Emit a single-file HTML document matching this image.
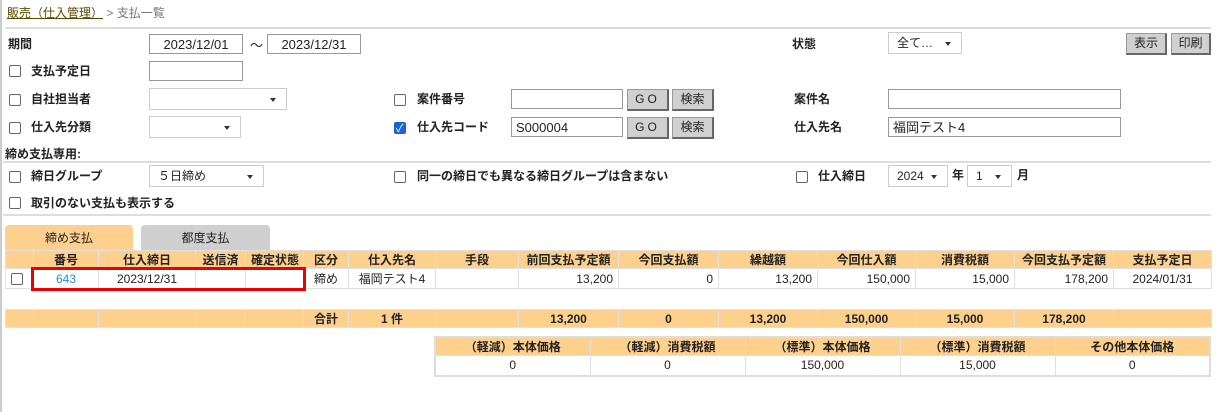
<!DOCTYPE html>
<html><head><meta charset="utf-8"><style>
*{box-sizing:border-box}
body{margin:0;width:1216px;height:412px;background:#fff;font-family:"Liberation Sans","Noto Sans CJK JP",sans-serif;font-size:12px;color:#222;position:relative;overflow:hidden}
.a{position:absolute}
.lb{font-weight:bold;font-size:12px;margin-top:-2px}
.inp{position:absolute;border:1px solid #999;background:#fff;height:20px;font-size:13px;padding:1px 4px;line-height:17px}
.sel{position:absolute;border:1px solid #ccc;background:#fff;height:22px;font-size:12px;padding:2px 8px;line-height:16px}
.sel:after{content:"";position:absolute;right:10px;top:9px;border:3px solid transparent;border-top:4px solid #333}
.cb{position:absolute;width:12px;height:12px;border:1px solid #666;border-radius:2px;background:#fff}
.cbk{background:#1a62d6;border-color:#1a62d6}
.btn{position:absolute;height:22px;background:#d0d0d0;border:1px solid #999;border-right:2px solid #666;border-bottom:2px solid #666;font-size:12px;text-align:center;line-height:18px}
table{border-collapse:collapse;position:absolute;table-layout:fixed}
td{border:1px solid #e0e0e0;padding:0 5px;font-size:12px;height:20px;white-space:nowrap;overflow:hidden}
.h td{background:#fdd08e;font-weight:bold;text-align:center;height:18px}
.r{text-align:right}.c{text-align:center}
</style></head><body>
<div class="a" style="left:0;top:0;width:2px;height:412px;background:#ccc"></div>
<div class="a" style="left:7px;top:4px;font-size:12px"><span style="color:#5a4a00;text-decoration:underline">販売（仕入管理）</span> <span style="color:#777">&gt; 支払一覧</span></div>
<div class="a" style="left:5px;top:27px;width:1206px;height:2px;background:#ddd"></div>

<div class="a lb" style="left:8px;top:37px">期間</div>
<div class="inp" style="left:149px;top:34px;width:94px;text-align:center">2023/12/01</div>
<div class="a" style="left:250px;top:35px;font-size:13px">～</div>
<div class="inp" style="left:267px;top:34px;width:94px;text-align:center">2023/12/31</div>
<div class="a lb" style="left:792px;top:37px">状態</div>
<div class="sel" style="left:888px;top:32px;width:74px">全て…</div>
<div class="btn" style="left:1126px;top:33px;width:41px">表示</div>
<div class="btn" style="left:1171px;top:33px;width:40px">印刷</div>

<div class="cb" style="left:9px;top:65px"></div><div class="a lb" style="left:31px;top:64px">支払予定日</div>
<div class="inp" style="left:149px;top:61px;width:94px"></div>

<div class="cb" style="left:9px;top:94px"></div><div class="a lb" style="left:31px;top:92px">自社担当者</div>
<div class="sel" style="left:149px;top:88px;width:138px"></div>
<div class="cb" style="left:394px;top:94px"></div><div class="a lb" style="left:417px;top:92px">案件番号</div>
<div class="inp" style="left:511px;top:89px;width:112px"></div>
<div class="btn" style="left:627px;top:89px;width:42px;letter-spacing:3px">GO</div>
<div class="btn" style="left:672px;top:89px;width:42px">検索</div>
<div class="a lb" style="left:794px;top:92px">案件名</div>
<div class="inp" style="left:888px;top:89px;width:233px"></div>

<div class="cb" style="left:9px;top:122px"></div><div class="a lb" style="left:31px;top:120px">仕入先分類</div>
<div class="sel" style="left:149px;top:116px;width:92px"></div>
<div class="cb cbk" style="left:394px;top:122px"><span style="position:absolute;left:1px;top:-3px;color:#fff;font-size:11px">✓</span></div><div class="a lb" style="left:417px;top:120px">仕入先コード</div>
<div class="inp" style="left:511px;top:117px;width:112px">S000004</div>
<div class="btn" style="left:627px;top:117px;width:42px;letter-spacing:3px">GO</div>
<div class="btn" style="left:672px;top:117px;width:42px">検索</div>
<div class="a lb" style="left:794px;top:120px">仕入先名</div>
<div class="inp" style="left:888px;top:117px;width:233px">福岡テスト4</div>

<div class="a lb" style="left:5px;top:147px">締め支払専用:</div>
<div class="a" style="left:3px;top:161px;width:1208px;height:2px;background:#ddd"></div>
<div class="a" style="left:3px;top:214px;width:1208px;height:2px;background:#ddd"></div>
<div class="cb" style="left:9px;top:171px"></div><div class="a lb" style="left:31px;top:169px">締日グループ</div>
<div class="sel" style="left:149px;top:165px;width:115px">５日締め</div>
<div class="cb" style="left:394px;top:171px"></div><div class="a lb" style="left:417px;top:169px">同一の締日でも異なる締日グループは含まない</div>
<div class="cb" style="left:796px;top:171px"></div><div class="a lb" style="left:818px;top:169px">仕入締日</div>
<div class="sel" style="left:888px;top:165px;width:60px">2024</div>
<div class="a lb" style="left:952px;top:168px">年</div>
<div class="sel" style="left:967px;top:165px;width:45px">1</div>
<div class="a lb" style="left:1017px;top:168px">月</div>
<div class="cb" style="left:9px;top:197px"></div><div class="a lb" style="left:31px;top:196px">取引のない支払も表示する</div>

<div class="a" style="left:5px;top:225px;width:128px;height:26px;background:#fdd08e;border-radius:4px 4px 0 0;text-align:center;line-height:26px">締め支払</div>
<div class="a" style="left:141px;top:225px;width:129px;height:26px;background:#cfcfcf;border-radius:4px 4px 0 0;text-align:center;line-height:26px">都度支払</div>
<div class="a" style="left:5px;top:250px;width:1206px;height:1px;background:#fdd08e"></div>

<table style="left:5px;top:250px;width:1206px">
<colgroup><col style="width:28px"><col style="width:65px"><col style="width:97px"><col style="width:50px"><col style="width:58px"><col style="width:45px"><col style="width:87px"><col style="width:83px"><col style="width:100px"><col style="width:100px"><col style="width:99px"><col style="width:98px"><col style="width:99px"><col style="width:99px"><col style="width:98px"></colgroup>
<tr class="h"><td></td><td>番号</td><td>仕入締日</td><td>送信済</td><td>確定状態</td><td>区分</td><td>仕入先名</td><td>手段</td><td>前回支払予定額</td><td>今回支払額</td><td>繰越額</td><td>今回仕入額</td><td>消費税額</td><td>今回支払予定額</td><td>支払予定日</td></tr>
<tr><td><span style="display:inline-block;width:12px;height:12px;border:1px solid #666;border-radius:2px;vertical-align:middle"></span></td><td class="c" style="color:#2a8fc8">643</td><td class="c">2023/12/31</td><td></td><td></td><td class="c">締め</td><td class="c">福岡テスト4</td><td></td><td class="r">13,200</td><td class="r">0</td><td class="r">13,200</td><td class="r">150,000</td><td class="r">15,000</td><td class="r">178,200</td><td class="c">2024/01/31</td></tr>
</table>
<div class="a" style="left:31px;top:267px;width:275px;height:24px;border:3px solid #e00"></div>

<table style="left:5px;top:309px;width:1206px">
<colgroup><col style="width:28px"><col style="width:65px"><col style="width:97px"><col style="width:50px"><col style="width:58px"><col style="width:45px"><col style="width:87px"><col style="width:83px"><col style="width:100px"><col style="width:100px"><col style="width:99px"><col style="width:98px"><col style="width:99px"><col style="width:99px"><col style="width:98px"></colgroup>
<tr class="h"><td></td><td></td><td></td><td></td><td></td><td>合計</td><td>1 件</td><td></td><td class="r">13,200</td><td class="r">0</td><td class="r">13,200</td><td class="r">150,000</td><td class="r">15,000</td><td class="r">178,200</td><td></td></tr>
</table>

<table style="left:434px;top:336px;width:777px;border:2px solid #ddd">
<tr class="h"><td>（軽減）本体価格</td><td>（軽減）消費税額</td><td>（標準）本体価格</td><td>（標準）消費税額</td><td>その他本体価格</td></tr>
<tr><td class="c" style="height:17px">0</td><td class="c">0</td><td class="c">150,000</td><td class="c">15,000</td><td class="c">0</td></tr>
</table>
</body></html>
